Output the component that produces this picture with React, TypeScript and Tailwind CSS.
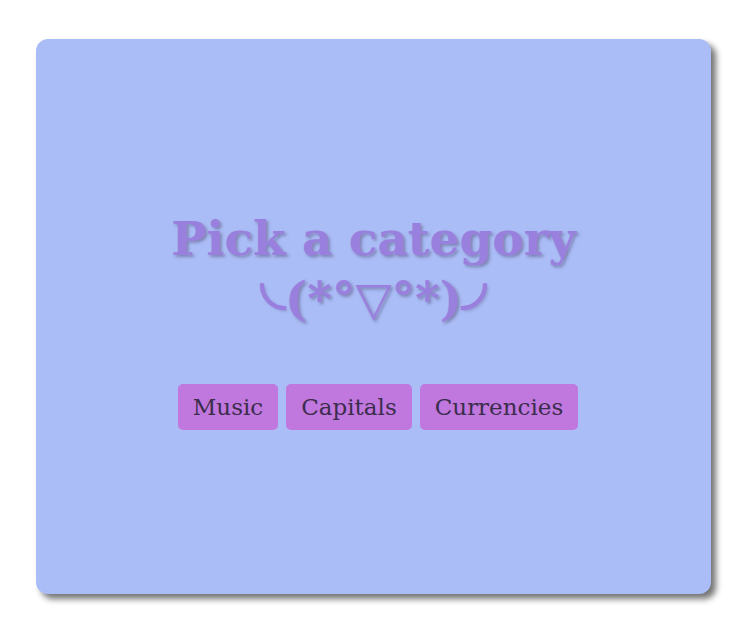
import React from "react";

const arc = "inline-block font-['Noto_Sans_CJK_JP',sans-serif] text-[46px] translate-y-[6px] [-webkit-text-stroke:2.5px_#9a80de]";

export default function App() {
  return (
    <div className="w-[749px] h-[617px] bg-white pt-[39px] pl-[36px] font-['DejaVu_Serif',serif]">
      <div className="w-[675px] h-[555px] rounded-[12px] bg-[#abbdf7] shadow-[5px_5px_6px_rgba(0,0,0,0.55)] flex flex-col items-center justify-center">
        <div className="text-[#9a80de] font-bold text-[47px] leading-[58px] text-center [text-shadow:2px_2px_3px_rgba(80,80,120,0.5)] mt-[6px]">
          <div>Pick a category</div>
          <div className="mt-[2px] flex items-center justify-center">
            <span className={arc}>╰</span>
            <span>(*°▽°*)</span>
            <span className={arc}>╯</span>
          </div>
        </div>
        <div className="flex gap-[8px] mt-[56px] pl-[9px]">
          {["Music", "Capitals", "Currencies"].map((t) => (
            <button key={t} className="bg-[#c077de] text-[#3b2d4c] text-[23px] leading-[46px] h-[46px] px-[15px] rounded-[5px] font-['DejaVu_Serif',serif]">
              {t}
            </button>
          ))}
        </div>
      </div>
    </div>
  );
}
